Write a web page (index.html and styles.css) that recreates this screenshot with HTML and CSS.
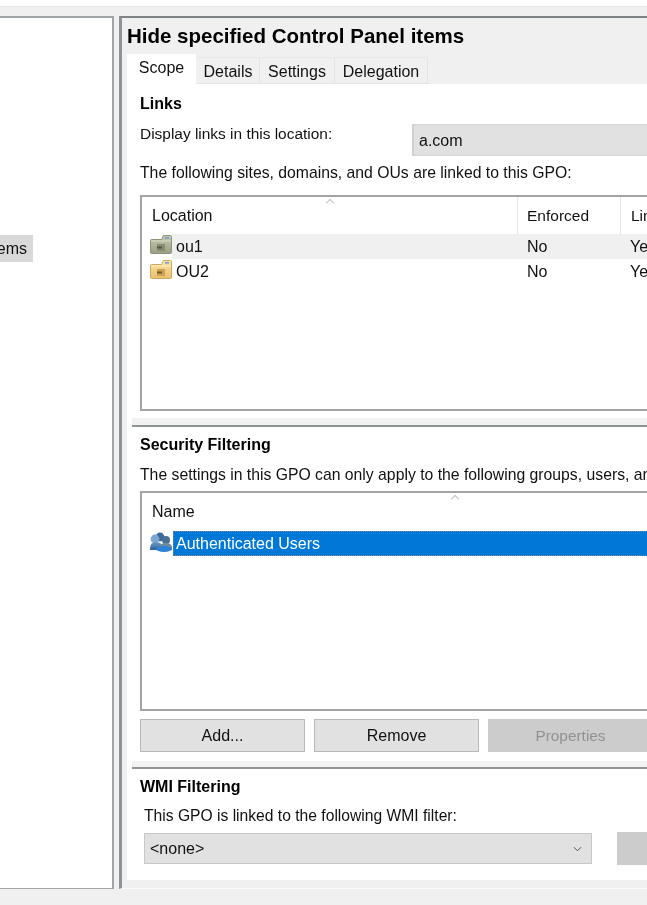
FILE: index.html
```html
<!DOCTYPE html>
<html lang="en">
<head>
<meta charset="utf-8">
<title>Hide specified Control Panel items</title>
<link rel="stylesheet" href="styles.css">
</head>
<body>
<svg class="defs" width="0" height="0" aria-hidden="true">
  <defs>
    <linearGradient id="fy" x1="0" y1="0" x2="0" y2="1"><stop offset="0" stop-color="#fbe6a6"/><stop offset="1" stop-color="#e8bf6c"/></linearGradient>
    <linearGradient id="fg" x1="0" y1="0" x2="0" y2="1"><stop offset="0" stop-color="#c4cab0"/><stop offset="1" stop-color="#9aa086"/></linearGradient>
    <linearGradient id="ub" x1="0" y1="0" x2="0" y2="1"><stop offset="0" stop-color="#6f9ccb"/><stop offset="1" stop-color="#2e5f96"/></linearGradient>
  </defs>
</svg>
<div class="app">
  <div class="topline"></div>
  <div class="panes">
    <aside class="tree">
      <div class="tree-item"><span>Hide specified Control Panel items</span></div>
    </aside>
    <main class="detail">
      <h1 class="title">Hide specified Control Panel items</h1>
      <div class="tabs">
        <div class="tab active">Scope</div>
        <div class="tab details">Details</div>
        <div class="tab settings">Settings</div>
        <div class="tab delegation">Delegation</div>
      </div>
      <section class="sec links">
        <h2 class="head">Links</h2>
        <div class="loc-row">
          <span class="loc-label">Display links in this location:</span>
          <div class="combo">a.com</div>
        </div>
        <p class="line following">The following sites, domains, and OUs are linked to this GPO:</p>
        <div class="list list-links">
          <span class="sort sort-a"></span>
          <div class="row hdr">
            <div class="c1">Location</div><div class="c2">Enforced</div><div class="c3">Link Enabled</div>
          </div>
          <div class="row item hot">
            <svg class="ico" viewBox="0 0 22 20"><path d="M.5 5.5q0-1 1-1h10l2-4h7q1 0 1 1v16q0 1-1 1h-19q-1 0-1-1z" fill="url(#fg)" stroke="#8d9378"/><path d="M1 6h20" stroke="#d8dcc8"/><rect x="15" y="2" width="4" height="1.6" fill="#6fa3d8"/><rect x="7" y="9" width="8" height="7" fill="#8a8b70"/><rect x="7" y="11.5" width="5" height="2" fill="#57553f"/></svg>
            <div class="c1 name">ou1</div><div class="c2">No</div><div class="c3">Yes</div>
          </div>
          <div class="row item">
            <svg class="ico" viewBox="0 0 22 20"><path d="M.5 5.5q0-1 1-1h10l2-4h7q1 0 1 1v16q0 1-1 1h-19q-1 0-1-1z" fill="url(#fy)" stroke="#d2a85c"/><path d="M1 6h20" stroke="#fdf1c8"/><rect x="15" y="2" width="4" height="1.6" fill="#6fa3d8"/><rect x="7" y="9" width="8" height="7" fill="#c9a35a"/><rect x="7" y="11.5" width="5" height="2" fill="#7a5a22"/></svg>
            <div class="c1 name">OU2</div><div class="c2">No</div><div class="c3">Yes</div>
          </div>
        </div>
      </section>
      <div class="split"><div class="bar"></div></div>
      <section class="sec security">
        <h2 class="head">Security Filtering</h2>
        <p class="line settings-line">The settings in this GPO can only apply to the following groups, users, and computers:</p>
        <div class="list list-sec">
          <span class="sort sort-b"></span>
          <div class="row hdr hdr-name"><div class="c1">Name</div></div>
          <div class="row item">
            <svg class="ico" viewBox="0 0 22 20"><circle cx="10" cy="5" r="4.4" fill="#3a6a9c"/><circle cx="5" cy="7" r="4.4" fill="#7ba6d4"/><path d="M0 18c0-6 2-8 6-8s7 2 7 8z" fill="url(#ub)"/><circle cx="16" cy="8" r="4" fill="#4a6f92"/><path d="M9 16c0-3 3-5 7-5s6 2 6 5v2H9z" fill="#6f89a3"/><ellipse cx="14" cy="17" rx="8" ry="3" fill="#2b82d6"/></svg>
            <div class="selected">Authenticated Users</div>
          </div>
        </div>
        <div class="buttons">
          <div class="btn">Add...</div>
          <div class="btn">Remove</div>
          <div class="btn off">Properties</div>
        </div>
      </section>
      <div class="split split2"><div class="bar"></div></div>
      <section class="sec wmi">
        <h2 class="head">WMI Filtering</h2>
        <p class="line wmi-line">This GPO is linked to the following WMI filter:</p>
        <div class="wmi-row">
          <div class="select"><span>&lt;none&gt;</span>
            <svg class="chev" viewBox="0 0 10 6"><path d="M1 1l4 4 4-4" fill="none" stroke="#555" stroke-width="1.1"/></svg>
          </div>
          <div class="btn off open"></div>
        </div>
      </section>
    </main>
  </div>
  <div class="footer"></div>
</div>
</body>
</html>
```

FILE: styles.css
```css
* { box-sizing: border-box; }
html, body { margin: 0; padding: 0; height: 100%; background: #f0f0f0; }
body { font-family: "Liberation Sans", Arial, sans-serif; font-size: 16px; color: #111; overflow: hidden; }
.defs { position: absolute; }
.app { width: 647px; height: 905px; overflow: hidden; display: flex; flex-direction: column; filter: blur(.35px); }
.topline { height: 16px; flex: none; background: linear-gradient(#fff 0 6px, #e8e8e8 6px 7px, #f0f0f0 7px); }
.panes { display: flex; height: 873px; flex: none; gap: 5px; }
.tree { width: 114px; flex: none; background: #fff; border: 2px solid #a0a6a8; border-left: 0; border-bottom-width: 1px; padding-top: 217px; }
.tree-item { width: 33px; height: 27px; background: #d9d9d9; display: flex; justify-content: flex-end; align-items: center; padding-right: 6px; overflow: hidden; white-space: nowrap; }
.tree-item span { flex: none; }
.detail { width: 760px; flex: none; background: #f0f0f0; border-left: 3px solid #8e9496; border-top: 2px solid #7d8385; padding-left: 5px; border-bottom: 1px solid #fbfbfb; display: flex; flex-direction: column; }
.title { margin: 0; flex: none; font-size: 20.5px; line-height: 26px; height: 36px; padding-top: 5px; font-weight: 700; color: #000; white-space: nowrap; }
.tabs { display: flex; height: 30px; align-items: flex-end; flex: none; }
.tab { height: 27px; line-height: 28px; text-align: center; background: #f0f0f0; border-right: 1px solid #e4e4e4; border-top: 1px solid #e8e8e8; border-bottom: 1px solid #e4e4e4; }
.tab.active { height: 30px; width: 69px; background: #fff; line-height: 28px; margin-right: 1px; border: 0; }
.tab.details { width: 63px; }
.tab.settings { width: 75px; }
.tab.delegation { width: 93px; }
.sec { background: #fff; padding-left: 13px; flex: none; }
.links { height: 334px; padding-top: 10px; }
.security { height: 334px; padding-top: 8px; }
.wmi { height: 111px; padding-top: 8px; }
.split { height: 9px; flex: none; background: #fff; padding-left: 5px; }
.split2 { height: 8px; }
.bar { height: 100%; background: #f2f2f2; border-bottom: 2px solid #8e9496; }
.head { margin: 0; font-size: 16px; line-height: 20px; font-weight: 700; color: #000; }
.line { margin: 0; line-height: 20px; white-space: nowrap; }
.loc-row { display: flex; margin-top: 10px; height: 32px; }
.loc-label { width: 272px; flex: none; line-height: 20px; font-size: 15.45px; }
.combo { width: 300px; height: 32px; background: #e1e1e1; border: 1px solid #d4d4d4; border-left: 2px solid #d0d0d0; padding-left: 5px; line-height: 32px; }
.following { margin-top: 7px; font-size: 15.75px; }
.settings-line { margin-top: 10px; font-size: 15.75px; }
.list { position: relative; width: 640px; background: #fff; border: 2px solid #a0a4a6; border-right: 0; }
.list-links { height: 216px; margin-top: 12px; }
.list-sec { height: 220px; margin-top: 6px; }
.sort { position: absolute; top: 2px; width: 8px; height: 8px; border-left: 1px solid #a8a8a8; border-top: 1px solid #a8a8a8; transform: rotate(45deg) scale(.72); }
.sort-a { left: 184px; }
.sort-b { left: 309px; }
.row { display: flex; height: 25px; line-height: 25px; padding-left: 10px; white-space: nowrap; }
.hdr { height: 37px; line-height: 37px; }
.hdr-name { height: 38px; line-height: 38px; }
.c1 { width: 365px; flex: none; }
.c2 { width: 103px; flex: none; padding-left: 9px; }
.c3 { flex: none; padding-left: 10px; width: 120px; }
.hdr .c2, .hdr .c3 { border-left: 1px solid #e5e5e5; font-size: 15.5px; }
.item .c2 { padding-left: 10px; }
.item { padding-left: 8px; align-items: center; }
.ico { width: 22px; height: 20px; flex: none; margin-top: -3px; }
.item .name { width: 345px; padding-left: 4px; }
.hot { background: linear-gradient(90deg, #fff 30px, #f0f0f0 30px); }
.selected { flex: 1; background: #0078d7; color: #fff; height: 25px; line-height: 25px; padding-left: 3px; margin-left: 1px; outline: 1px dotted #888; outline-offset: -1px; }
.buttons { display: flex; gap: 9px; margin-top: 8px; }
.btn { width: 165px; height: 33px; line-height: 31px; text-align: center; background: #e1e1e1; border: 1px solid #b8b8b8; flex: none; color: #111; }
.off { background: #ccc; border-color: #ccc; color: #919191; font-size: 15.4px; }
.wmi-line { padding-left: 4px; margin-top: 9px; font-size: 15.65px; }
.wmi-row { display: flex; margin-top: 6px; padding-left: 4px; align-items: center; gap: 25px; }
.select { width: 448px; height: 31px; background: #e1e1e1; border: 1px solid #c8c8c8; padding: 0 9px 0 5px; line-height: 29px; display: flex; justify-content: space-between; align-items: center; }
.chev { width: 9px; height: 6px; }
.open { width: 100px; }
.footer { flex: 1; background: #f0f0f0; }
```
